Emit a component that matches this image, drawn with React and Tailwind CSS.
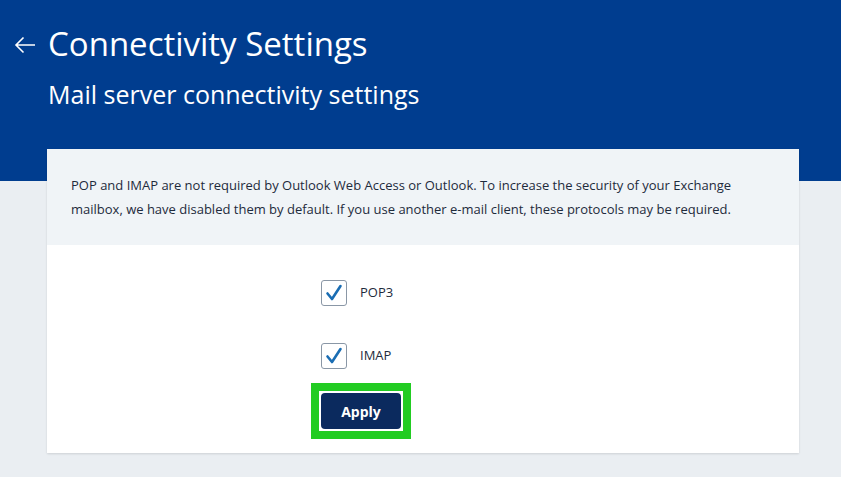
import React from "react";

function Check() {
  return (
    <div className="w-[26px] h-[26px] rounded-[3px] border border-[#8a97a6] bg-white flex items-center justify-center">
      <svg width="18" height="18" viewBox="0 0 18 18" fill="none">
        <path d="M2.5 9.5 L7 15 L15.5 2" stroke="#1a6db3" strokeWidth="2.6" strokeLinecap="round" strokeLinejoin="round" />
      </svg>
    </div>
  );
}

export default function App() {
  return (
    <div className="w-[841px] h-[477px] bg-[#eaeef2] overflow-hidden">
      <div className="h-[181px] bg-[#003d8f] text-white pt-[23px]">
        <div className="flex items-center">
          <svg className="ml-[14px] mr-[12px] mt-[2px]" width="22" height="18" viewBox="0 0 22 18" fill="none">
            <path d="M21 9 H2 M9.5 1.5 L2 9 L9.5 16.5" stroke="white" strokeWidth="1.6" />
          </svg>
          <h1 className="font-['Open_Sans',sans-serif] text-[33px] leading-[42px] font-normal">Connectivity Settings</h1>
        </div>
        <div className="ml-[48px] mt-[12px] font-['Open_Sans',sans-serif] text-[25px] leading-[34px]">Mail server connectivity settings</div>
      </div>
      <div className="ml-[47px] w-[752px] -mt-[32px] bg-white shadow-[0_1px_2px_rgba(0,0,0,0.12)] h-[304px] flex flex-col">
        <div className="h-[96px] bg-[#f0f4f7] px-[24px] pt-[24px] font-['Open_Sans',sans-serif] text-[13px] leading-[24px] text-[#1e2b3c]">
          POP and IMAP are not required by Outlook Web Access or Outlook. To increase the security of your Exchange mailbox, we have disabled them by default. If you use another e-mail client, these protocols may be required.
        </div>
        <div className="pl-[274px] pt-[35px] flex flex-col">
          <label className="flex items-center gap-[13px] h-[26px]">
            <Check />
            <span className="font-['Open_Sans',sans-serif] text-[13px] text-[#1e2b3c]">POP3</span>
          </label>
          <label className="flex items-center gap-[13px] h-[26px] mt-[37px]">
            <Check />
            <span className="font-['Open_Sans',sans-serif] text-[13px] text-[#1e2b3c]">IMAP</span>
          </label>
          <div className="mt-[14px] -ml-[10px] self-start border-8 border-[#22cc22] bg-white p-[2px]">
            <button className="block w-[80px] h-[36px] bg-[#0b2a5e] rounded-[4px] text-white font-['Open_Sans',sans-serif] font-bold text-[14px]">
              Apply
            </button>
          </div>
        </div>
      </div>
    </div>
  );
}
